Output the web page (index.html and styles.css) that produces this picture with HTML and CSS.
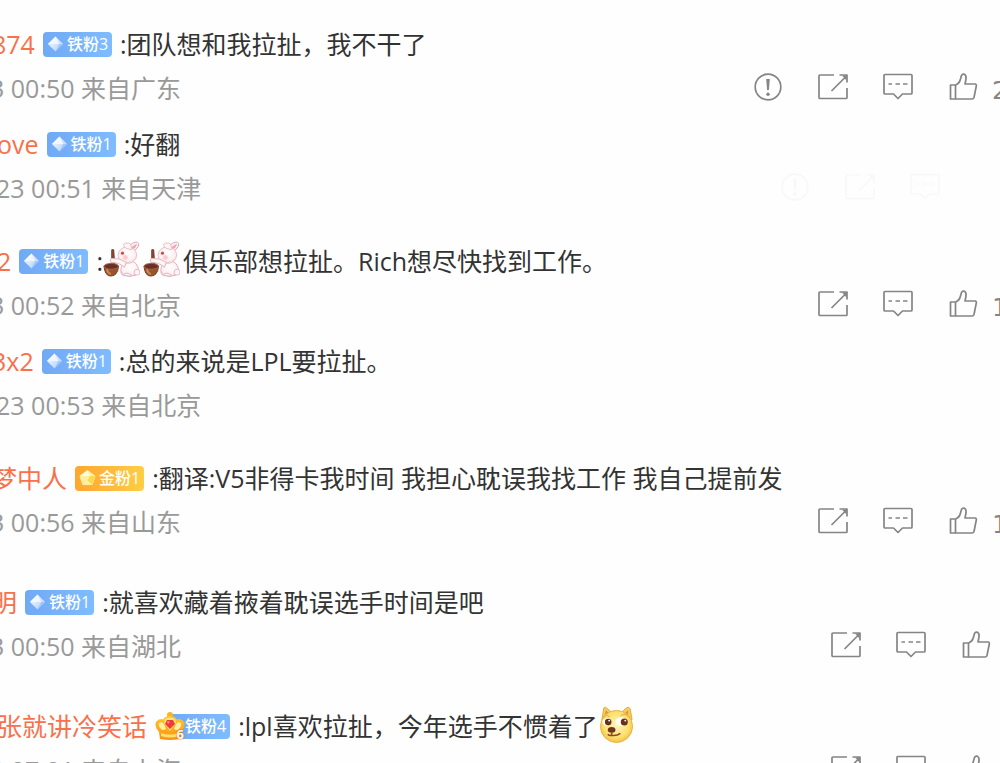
FILE: index.html
```html
<!DOCTYPE html>
<html lang="zh-CN">

<head>
    <meta charset="UTF-8">
    <meta name="viewport" content="width=device-width, initial-scale=1.0">
    <title>评论</title>
    <link rel="stylesheet" href="styles.css">
</head>

<body>
    <!-- Shared icons -->
    <svg class="sprite" aria-hidden="true">
        <defs>
            <linearGradient id="gemFill" x1="0" y1="0" x2="1" y2="1">
                <stop offset="0" stop-color="#ffffff" />
                <stop offset="1" stop-color="#a9cdfc" />
            </linearGradient>
            <linearGradient id="crownFill" x1="0" y1="0" x2="0" y2="1">
                <stop offset="0" stop-color="#ffc928" />
                <stop offset="1" stop-color="#ff8f12" />
            </linearGradient>
            <radialGradient id="dogFill" cx="0.5" cy="0.45" r="0.6">
                <stop offset="0" stop-color="#fff6c0" />
                <stop offset="0.65" stop-color="#fde06f" />
                <stop offset="1" stop-color="#eeb73c" />
            </radialGradient>
            <radialGradient id="furFill" cx="0.5" cy="0.4" r="0.65">
                <stop offset="0" stop-color="#ffffff" />
                <stop offset="0.7" stop-color="#fdeef0" />
                <stop offset="1" stop-color="#e9bfc8" />
            </radialGradient>
        </defs>
        <symbol id="alert" viewBox="0 0 30 30">
            <circle cx="15" cy="15" r="12.8" />
            <path d="M13.2 7h3.6l-.9 11h-1.8z" fill="#858585" stroke="none" />
            <circle cx="15" cy="22.3" r="1.7" fill="#858585" stroke="none" />
        </symbol>
        <symbol id="share" viewBox="0 0 30 30">
            <path d="M16 3H2Q1 3 1 4V25.500Q1 26.500 2 26.500H28Q29 26.500 29 25.500V16" />
            <path d="M13.500 19L28.500 4M21.500 3H29V10.500" />
            <path d="M24 3.500H28.500V8.500z" fill="#858585" stroke="none" />
        </symbol>
        <symbol id="comment" viewBox="0 0 30 30">
            <path d="M2 2.500H28Q29 2.500 29 3.500V21Q29 22 28 22H19.500L15 26.500L10.500 22H2Q1 22 1 21V3.500Q1 2.500 2 2.500z" />
            <path d="M5.500 12H9M12.500 12H17M20 12H24.500" />
        </symbol>
        <symbol id="like" viewBox="0 0 30 30">
            <path d="M2.500 13H7.500V27H2.500z" />
            <path d="M7.500 13Q11.500 11.500 12.500 7L13.500 3.500Q14.500 1.500 16.500 2.300Q18.500 3.500 18 7L17 12H27Q28.700 12.200 28.300 14L26 25.500Q25.600 27 24 27H7.500" />
        </symbol>
        <symbol id="gem" viewBox="0 0 18 18">
            <path d="M9 1L17 9L9 17L1 9z" fill="url(#gemFill)" />
            <path d="M9 1L13 9H1z" fill="#ffffff" opacity="0.6" />
            <path d="M9 17L13 9H17z" fill="#7fb0f5" opacity="0.5" />
        </symbol>
        <symbol id="goldgem" viewBox="0 0 18 18">
            <path d="M9 1L17 7L14 16H4L1 7z" fill="#fff0a0" stroke="#fff0a0" stroke-linejoin="round" />
            <path d="M9 1L11.500 7H1z" fill="#fffbe0" />
            <path d="M11.500 7H17L14 16L9 12z" fill="#ffd84e" />
        </symbol>
        <symbol id="crown" viewBox="0 0 30 30">
            <circle cx="15" cy="4" r="3" fill="#ffb31a" />
            <path d="M5 28L4 21Q-1 16 1 11Q4 7 8 8.500Q10 5 15 5Q20 5 22 8.500Q26 7 29 11Q31 16 26 21L25 28Q15 30 5 28z" fill="url(#crownFill)" />
            <path d="M4 12Q7 10 9 13L11 18Q8 20 6 18Q3 15 4 12zM26 12Q23 10 21 13L19 18Q22 20 24 18Q27 15 26 12z" fill="#fff0a0" />
            <path d="M10 8Q15 5 20 8L21 12L15 20L9 12z" fill="#ffe27a" />
            <path d="M6 22Q15 25 24 22V25Q15 28 6 25z" fill="#ffe26a" />
            <path d="M15 18L10 13L12 9H18L20 13z" fill="#ef3b3b" />
            <path d="M12 10.500H15L13 13z" fill="#ffa0a0" />
        </symbol>
        <symbol id="rabbit" viewBox="0 0 38 38">
            <path d="M9 9L11 9L12 25H9z" fill="#8c4a34" stroke="#70392b" />
            <path d="M26 9Q26 3 34 1Q38 2 36 6Q34 10 29 11z" fill="#fff4f5" stroke="#d9a5b0" />
            <path d="M29 8Q30 4 35 3Q34 7 30 9z" fill="#f3a6b5" />
            <path d="M21 21Q33 18 36 27Q38 31 34 35Q27 38 20 35Q16 32 21 21z" fill="url(#furFill)" stroke="#dfb1bd" />
            <circle cx="35" cy="32" r="3" fill="#fff5f6" stroke="#e4bac4" />
            <ellipse cx="25" cy="14.500" rx="9.500" ry="8.500" fill="url(#furFill)" stroke="#e6bec7" />
            <path d="M23 7Q18 2 26 2Q30 3 29 9z" fill="#fff7f7" stroke="#e6bec7" />
            <circle cx="20" cy="12.500" r="1.600" fill="#d84642" />
            <circle cx="23" cy="17" r="2.500" fill="#ffc9cf" />
            <path d="M24 22Q17 17 9 18Q6 19 8 22Q17 22 22 27z" fill="#fff5f5" stroke="#e2b6c0" />
            <path d="M1 26Q2 36 8 36Q15 36 16 26z" fill="#96552f" stroke="#7a3d24" />
            <ellipse cx="8.500" cy="26" rx="7.500" ry="3" fill="#6b2f29" stroke="#a8683a" />
            <path d="M4 29Q5 33 8 34" fill="none" stroke="#d08a50" stroke-width="2" />
            <path d="M21 35Q24 31 29 35" fill="#fff8f8" stroke="#dfb1bd" />
        </symbol>
        <symbol id="doge" viewBox="0 0 38 38">
            <path d="M4 14L6 2Q7 0 10 3L14 7H24L29 2Q32 0 33 3L35 14z" fill="#f7cf58" stroke="#e3a83a" />
            <path d="M7 9L8 4L12 8zM31 9L31 4L27 8z" fill="#d99a3f" />
            <circle cx="19" cy="21" r="16.500" fill="url(#dogFill)" stroke="#e8b442" />
            <ellipse cx="9.500" cy="16.500" rx="5" ry="4" fill="#fffef5" />
            <ellipse cx="24" cy="16" rx="6" ry="4.500" fill="#fffef5" />
            <circle cx="10.500" cy="16.500" r="3.400" fill="#68301b" />
            <circle cx="27" cy="16.500" r="3.600" fill="#68301b" />
            <circle cx="11.500" cy="15" r="1" fill="#fff" />
            <circle cx="28" cy="15" r="1" fill="#fff" />
            <path d="M5 11Q9 8 12 11M23 10Q28 7 32 11" fill="none" stroke="#e0ac4a" />
            <ellipse cx="14" cy="24.500" rx="4" ry="3" fill="#713421" />
            <path d="M14 27V30Q19 31 23 28M14 30Q12 31 10 29" fill="none" stroke="#8a4a25" stroke-width="1.600" />
        </symbol>
    </svg>

    <main class="comments">
        <section class="thread">
            <article class="comment">
                <div class="line cut">
                    <a class="name" href="#">874</a>
                    <span class="badge"><svg class="gem"><use href="#gem" /></svg>铁粉3</span>
                    <span class="text">:团队想和我拉扯，我不干了</span>
                </div>
                <div class="meta">
                    <span class="from cut">3 00:50 来自广东</span>
                    <div class="actions counted">
                        <button aria-label="举报"><svg><use href="#alert" /></svg></button>
                        <button aria-label="转发"><svg><use href="#share" /></svg></button>
                        <button aria-label="回复"><svg><use href="#comment" /></svg></button>
                        <button aria-label="赞"><svg><use href="#like" /></svg></button>
                        <span class="count">2</span>
                    </div>
                </div>
            </article>
            <article class="comment">
                <div class="line">
                    <a class="name" href="#">ove</a>
                    <span class="badge"><svg class="gem"><use href="#gem" /></svg>铁粉1</span>
                    <span class="text">:好翻</span>
                </div>
                <div class="meta">
                    <span class="from">23 00:51 来自天津</span>
                    <div class="actions faded">
                        <button aria-label="举报"><svg><use href="#alert" /></svg></button>
                        <button aria-label="转发"><svg><use href="#share" /></svg></button>
                        <button aria-label="回复"><svg><use href="#comment" /></svg></button>
                    </div>
                </div>
            </article>
        </section>

        <section class="thread">
            <article class="comment">
                <div class="line">
                    <a class="name" href="#">2</a>
                    <span class="badge"><svg class="gem"><use href="#gem" /></svg>铁粉1</span>
                    <span class="text">:<svg class="emoji"><use href="#rabbit" /></svg><svg class="emoji"><use href="#rabbit" /></svg>俱乐部想拉扯。Rich想尽快找到工作。</span>
                </div>
                <div class="meta">
                    <span class="from cut">3 00:52 来自北京</span>
                    <div class="actions counted">
                        <button aria-label="转发"><svg><use href="#share" /></svg></button>
                        <button aria-label="回复"><svg><use href="#comment" /></svg></button>
                        <button aria-label="赞"><svg><use href="#like" /></svg></button>
                        <span class="count">1</span>
                    </div>
                </div>
            </article>
            <article class="comment">
                <div class="line cut">
                    <a class="name" href="#">3x2</a>
                    <span class="badge"><svg class="gem"><use href="#gem" /></svg>铁粉1</span>
                    <span class="text">:总的来说是LPL要拉扯。</span>
                </div>
                <div class="meta">
                    <span class="from">23 00:53 来自北京</span>
                </div>
            </article>
        </section>

        <section class="thread">
            <article class="comment">
                <div class="line cut">
                    <a class="name" href="#">梦中人</a>
                    <span class="badge gold"><svg class="gem"><use href="#goldgem" /></svg>金粉1</span>
                    <span class="text">:翻译:V5非得卡我时间 我担心耽误我找工作 我自己提前发</span>
                </div>
                <div class="meta">
                    <span class="from cut">3 00:56 来自山东</span>
                    <div class="actions counted">
                        <button aria-label="转发"><svg><use href="#share" /></svg></button>
                        <button aria-label="回复"><svg><use href="#comment" /></svg></button>
                        <button aria-label="赞"><svg><use href="#like" /></svg></button>
                        <span class="count">1</span>
                    </div>
                </div>
            </article>
        </section>

        <section class="thread spaced">
            <article class="comment">
                <div class="line cut">
                    <a class="name" href="#">明</a>
                    <span class="badge"><svg class="gem"><use href="#gem" /></svg>铁粉1</span>
                    <span class="text">:就喜欢藏着掖着耽误选手时间是吧</span>
                </div>
                <div class="meta">
                    <span class="from cut">3 00:50 来自湖北</span>
                    <div class="actions">
                        <button aria-label="转发"><svg><use href="#share" /></svg></button>
                        <button aria-label="回复"><svg><use href="#comment" /></svg></button>
                        <button aria-label="赞"><svg><use href="#like" /></svg></button>
                    </div>
                </div>
            </article>
        </section>

        <section class="thread spaced">
            <article class="comment">
                <div class="line">
                    <a class="name" href="#">张就讲冷笑话</a>
                    <span class="badge crowned"><span class="crown"><svg><use href="#crown" /></svg><b>6</b></span>铁粉4</span>
                    <span class="text">:lpl喜欢拉扯，今年选手不惯着了<svg class="emoji"><use href="#doge" /></svg></span>
                </div>
                <div class="meta">
                    <span class="from cut">3 07:01 来自上海</span>
                    <div class="actions">
                        <button aria-label="转发"><svg><use href="#share" /></svg></button>
                        <button aria-label="回复"><svg><use href="#comment" /></svg></button>
                        <button aria-label="赞"><svg><use href="#like" /></svg></button>
                    </div>
                </div>
            </article>
        </section>
    </main>
</body>

</html>
```
FILE: styles.css
```css
body {
    margin: 0;
    background-color: #fefefe;
    color: #333;
    font-family: "Open Sans", "Noto Sans CJK SC", sans-serif;
    font-size: 25px;
    overflow: hidden;
}

.sprite {
    display: block;
    width: 0;
    height: 0;
}

.comments {
    padding-top: 22px;
}

.thread {
    display: flex;
    flex-direction: column;
    gap: 11px;
    margin-bottom: 28px;
}

.thread.spaced {
    margin-top: 35px;
}

.line {
    display: flex;
    align-items: center;
    gap: 8px;
    height: 44px;
    margin-left: -3px;
    line-height: 44px;
    white-space: nowrap;
}

/* first character runs off the left edge */
.line.cut {
    margin-left: -8px;
}

.name {
    color: #f9704a;
    text-decoration: none;
}

.badge {
    display: flex;
    align-items: center;
    gap: 3px;
    box-sizing: border-box;
    height: 25px;
    padding: 0 4px;
    border-radius: 4px;
    background: linear-gradient(90deg, #71a9f5, #7fbcff);
    color: #fff;
    font-size: 16px;
    font-weight: 500;
    line-height: 25px;
}

.badge.gold {
    background: linear-gradient(90deg, #ffa62f, #ffce45);
}

.badge.crowned {
    gap: 0;
    margin-left: 12px;
    padding-left: 0;
}

.gem {
    width: 17px;
    height: 18px;
}

.crown {
    position: relative;
    width: 30px;
    height: 30px;
    margin-left: -12px;
}

.crown svg {
    display: block;
    width: 30px;
    height: 30px;
}

.crown b {
    position: absolute;
    right: 1px;
    bottom: 0;
    color: #fff;
    font-size: 13px;
    line-height: 13px;
    text-shadow: 0 0 2px #e06500, 0 0 1px #e06500;
}

.emoji {
    width: 37px;
    height: 37px;
    margin-right: 3px;
    vertical-align: -7px;
}

.meta {
    display: flex;
    justify-content: space-between;
    height: 45px;
    line-height: 45px;
    white-space: nowrap;
}

.from {
    margin-left: -4px;
    color: #999;
}

.from.cut {
    margin-left: -10px;
}

.actions {
    display: flex;
    align-items: center;
    gap: 35px;
    height: 42px;
    margin-right: 9px;
}

.actions.counted {
    margin-right: -8px;
}

.actions.faded {
    margin-right: 60px;
    opacity: 0.04;
}

.actions button {
    width: 30px;
    height: 30px;
    padding: 0;
    border: 0;
    background: none;
    cursor: pointer;
}

.actions svg {
    display: block;
    width: 30px;
    height: 30px;
    fill: none;
    stroke: #858585;
    stroke-width: 1.7;
    stroke-linejoin: round;
}

.count {
    align-self: flex-start;
    margin-left: -21px;
    color: #858585;
    font-family: "DejaVu Sans", sans-serif;
    line-height: 50px;
}
```
